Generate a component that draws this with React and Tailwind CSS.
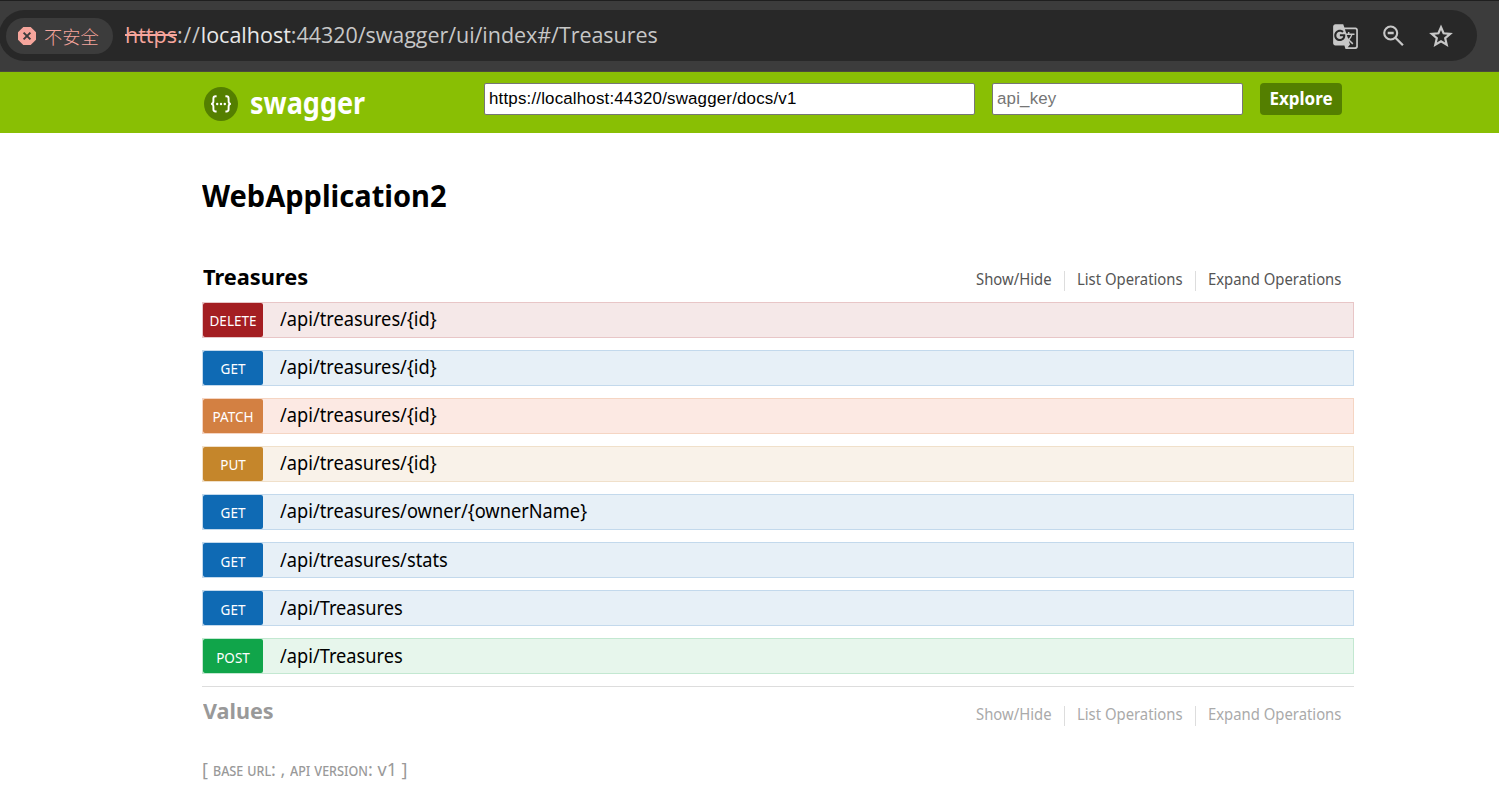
import React from "react";
import { MdGTranslate } from "react-icons/md";

const METHODS = {
  DELETE: { badge: "bg-[#a41e22]", row: "bg-[#f5e8e8] border-[#e8c6c7]" },
  GET: { badge: "bg-[#0f6ab4]", row: "bg-[#e7f0f7] border-[#c3d9ec]" },
  PATCH: { badge: "bg-[#d38042]", row: "bg-[#fce9e3] border-[#f5d5c3]" },
  PUT: { badge: "bg-[#c5862b]", row: "bg-[#f9f2e9] border-[#f0e0ca]" },
  POST: { badge: "bg-[#10a54a]", row: "bg-[#e7f6ec] border-[#c3e8d1]" },
};

const OPERATIONS = [
  ["DELETE", "/api/treasures/{id}"],
  ["GET", "/api/treasures/{id}"],
  ["PATCH", "/api/treasures/{id}"],
  ["PUT", "/api/treasures/{id}"],
  ["GET", "/api/treasures/owner/{ownerName}"],
  ["GET", "/api/treasures/stats"],
  ["GET", "/api/Treasures"],
  ["POST", "/api/Treasures"],
];

function AddressBar() {
  return (
    <div className="h-[72px] border-t border-b border-t-[#1f1f1f] border-b-[#4a4a3c] bg-[#3c3c3c] pt-[9px] pr-[22px]">
      <div className="-ml-px flex h-[51px] items-center rounded-full bg-[#282828] pl-[7px] pr-6">
        <div className="flex h-9 w-[107px] items-center rounded-full bg-[#3c3c3c] pl-3">
          <svg viewBox="0 0 18 18" className="size-[18px]">
            <path d="M5.3 0h7.4L18 5.3v7.4L12.7 18H5.3L0 12.7V5.3z" fill="#f6a59c" />
            <path d="M5.6 5.6l6.8 6.8M12.4 5.6l-6.800 6.8" stroke="#3c3c3c" strokeWidth="2" />
          </svg>
          <span className="ml-2 font-['Noto_Sans_CJK_SC',sans-serif] text-[18.3px] font-light leading-9 text-[#f6a59c]">不安全</span>
        </div>
        <div className="mb-0.5 ml-3 whitespace-nowrap font-['Open_Sans',sans-serif] text-[21.5px] leading-9 text-[#c7c7c7]">
          <span className="text-[#f6a59c] line-through decoration-2">https</span>
          <span className="tracking-[0.8px]">://</span>
          <span className="text-[#e8e8e8]">localhost</span>
          <span className="tracking-[-0.05px]">:44320/swagger/ui/index#/Treasures</span>
        </div>
        <div className="ml-auto flex items-center text-[#c7c7c7]">
          <MdGTranslate className="mt-px size-[27px]" />
          <svg viewBox="0 0 22 22" className="ml-6 size-[22px]" fill="none" stroke="currentColor">
            <circle cx="7.7" cy="8" r="6.500" strokeWidth="2.100" />
            <path d="M4.700 8h6M12.400 12.700l7.500 7.500" strokeWidth="2.300" />
          </svg>
          <svg viewBox="0 0 24 24" className="ml-6 size-6" fill="none" stroke="currentColor" strokeWidth="2.200">
            <path d="M12 3.200l2.600 6.100 6.600.6-5 4.300 1.500 6.500-5.700-3.400-5.700 3.400 1.500-6.500-5-4.300 6.600-.6z" />
          </svg>
        </div>
      </div>
    </div>
  );
}

function SwaggerHeader() {
  return (
    <header className="flex h-[61px] items-start bg-[#89bf04] pl-[204px] pt-[11px]">
      <svg viewBox="0 0 34 34" className="mt-1 size-[34px]">
        <circle cx="17" cy="17" r="17" fill="#547f00" />
        <g fill="none" stroke="#fff" strokeWidth="1.9">
          <path d="M12.600 9.300h-1c-1.600 0-2.200.8-2.200 2.200v2.700c0 1.700-.7 2.500-2.200 2.700 1.500.2 2.200 1 2.200 2.700v2.700c0 1.400.6 2.200 2.200 2.200h1" />
          <path d="M21.400 9.300h1c1.600 0 2.200.8 2.200 2.200v2.700c0 1.700.7 2.500 2.200 2.700-1.500.2-2.200 1-2.200 2.700v2.700c0 1.400-.6 2.200-2.200 2.200h-1" />
        </g>
        <g fill="#fff">
          <circle cx="13.200" cy="17" r="1.200" />
          <circle cx="17" cy="17" r="1.200" />
          <circle cx="20.800" cy="17" r="1.200" />
        </g>
      </svg>
      <div className="ml-3 w-[234px]">
        <span className="inline-block origin-left scale-x-[0.9] font-['Noto_Sans',sans-serif] text-[30px] font-bold leading-10 text-white">swagger</span>
      </div>
      <div className="h-8 w-[491px] rounded-[2px] border border-[#767676] bg-white pl-1 font-['Liberation_Sans',sans-serif] text-[16.900px] tracking-[0.18px] leading-[30px] text-black">https://localhost:44320/swagger/docs/v1</div>
      <div className="ml-[17px] h-8 w-[251px] rounded-[2px] border border-[#767676] bg-white pl-1 font-['Liberation_Sans',sans-serif] text-[16.900px] tracking-[0.18px] leading-[30px] text-[#757575]">api_key</div>
      <div className="ml-[17px] flex h-8 w-[82px] justify-center rounded bg-[#547f00]">
        <span className="font-['Noto_Sans',sans-serif] text-[17px] font-bold leading-[31px] text-white">Explore</span>
      </div>
    </header>
  );
}

function LinkText({ children }) {
  return <span className="inline-block origin-left scale-x-[0.873] whitespace-nowrap text-[17px] leading-5">{children}</span>;
}

function ResourceLinks({ color }) {
  return (
    <div className={`flex h-5 pr-[13px] leading-[0] ${color}`}>
      <div className="w-[88px]"><div className="-mt-0.5"><LinkText>Show/Hide</LinkText></div></div>
      <div className="w-[131px] border-l border-[#ddd] pl-3"><div className="-mt-0.5"><LinkText>List Operations</LinkText></div></div>
      <div className="w-[146px] border-l border-[#ddd] pl-3"><div className="-mt-0.5"><LinkText>Expand Operations</LinkText></div></div>
    </div>
  );
}

function Operation({ method, path, lowered }) {
  const style = METHODS[method];
  const badgeLine = lowered ? "leading-9" : "leading-[34px]";
  const pathLine = lowered ? "leading-[34px]" : "leading-8";
  return (
    <li className={`flex h-9 border ${style.row}`}>
      <div className={`flex h-[34px] w-[60px] justify-center rounded-[2px] pt-px text-[13.500px] text-white ${badgeLine} ${style.badge}`}>
        <span className="inline-block">{method}</span>
      </div>
      <span className={`ml-[17px] inline-block origin-left scale-x-[0.95] whitespace-nowrap text-[19.200px] text-black ${pathLine}`}>{path}</span>
    </li>
  );
}

export default function App() {
  return (
    <div className="h-[807px] overflow-hidden bg-white">
      <AddressBar />
      <SwaggerHeader />
      <main className="ml-[202px] w-[1152px] font-['Noto_Sans',sans-serif]">
        <h1 className="pt-[43px] text-[29.500px] font-bold leading-10 text-black"><span className="inline-block origin-left scale-x-[0.984]">WebApplication2</span></h1>
        <section className="mt-11">
          <div className="flex h-[42px] justify-between">
            <h2 className="pl-px text-[22px] font-bold leading-8 text-black"><span className="inline-block origin-left scale-x-[0.99]">Treasures</span></h2>
            <div className="pt-[11px]"><ResourceLinks color="text-[#555]" /></div>
          </div>
          <ul className="flex flex-col gap-3">
            {OPERATIONS.map(([method, path], i) => (
              <Operation key={i} method={method} path={path} lowered={i > 4} />
            ))}
          </ul>
        </section>
        <section className="mt-3 flex h-[66px] justify-between border-t border-[#ddd]">
          <h2 className="pl-px pt-[7px] text-[22px] font-bold leading-8 text-[#999]"><span className="inline-block origin-left scale-x-[0.98]">Values</span></h2>
          <div className="pt-[19px]"><ResourceLinks color="text-[#aaa]" /></div>
        </section>
        <footer className="flex whitespace-pre pt-px text-[18px] leading-8 text-[#999]">
          <span className="w-[11px]">[ </span>
          <span className="w-[58px]"><span className="inline-block origin-left scale-x-[0.86] [font-variant:small-caps]">base url</span></span>
          <span className="w-[19px]">: ,</span>
          <span className="w-[78px]"><span className="inline-block origin-left scale-x-[0.86] [font-variant:small-caps]">api version</span></span>
          <span>: v1 ]</span>
        </footer>
      </main>
    </div>
  );
}
